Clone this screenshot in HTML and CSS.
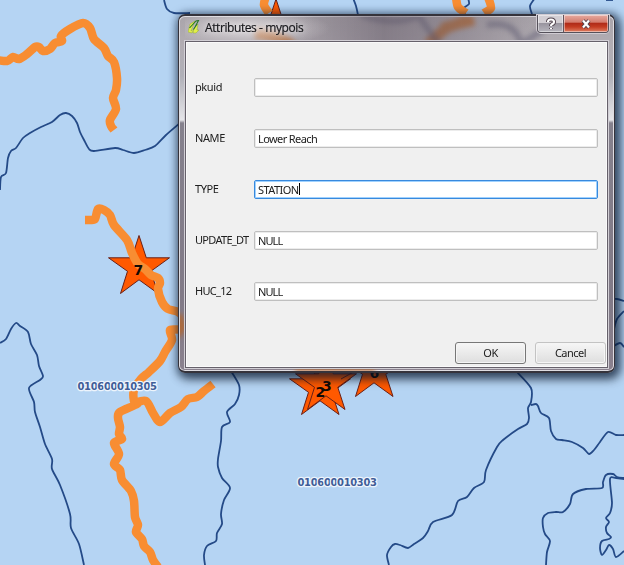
FILE: index.html
```html
<!DOCTYPE html>
<html lang="en">
<head>
<meta charset="utf-8">
<title>Attributes - mypois</title>
<link rel="stylesheet" href="styles.css">
</head>
<body>
<main class="screen">
  <svg class="map" viewBox="0 0 624 565" width="624" height="565">
    <defs><path id="star" d="M0-32.500L7.300-10.200H30.500L11.800 3.300L19 25.500L0 11.800L-18.500 25.500L-11.500 3.300L-30.500-10.200H-7.300Z"/></defs>
    <g class="boundary">
      <path d="M0 190L1 177L6 173L8 158L11 151L16 148L23 138L30 133L41 127L52 122L60 115L66 113L72 116L77 123L80 132L84 140L89 149L94 151L115 148L123 150L134 153L145 150L155 146L166 135L180 123"/>
      <path d="M164 0L167 9L174 13L190 13"/>
      <path d="M353 -2L356 6L358 15"/>
      <path d="M0 343L6 339L11 329L16 323L20 326L28 332L31 344L37 355L39 366L43 376L40 380L29 388L34 402L35 412L40 427L45 444L52 459L52 469L60 485L70 514L71 528L79 544L84 565"/>
      <path d="M231 371L239 385L239 395L235 404L227 412L230 422L222 427L221 441L218 459L218 467L222 478L230 488L224 500L221 514L222 524L217 533L216 541L207 546L204 555L205 565"/>
      <path d="M389 565L387 555L391 547L395 544L400 545L408 548L414 544L423 538L428 531L433 522L452 515L458 501L467 497L474 488L484 482L486 470L497 447L503 440L518 429L527 424L529 418L528 408L531 402L531 388L516 371"/>
      <path d="M531 405L536 404L538 406L541 413L549 418L551 431L556 439L562 440L572 442L583 448L589 454L594 450L600 442L608 432L616 435L624 435"/>
      <path d="M546 565L547 552L550 541L545 534L543 527L543 518L548 513L556 512L563 512L570 504L573 494L586 489L602 488L603 482L606 475L613 474L617 477L624 478"/>
      <path d="M624 479L616 478L610 479L612 503L610 513L606 518L609 522L606 527L607 533L611 537L609 539L602 541L600 548L602 555L606 550L609 545L613 549L616 557L624 551"/>
      <path d="M468 -2L469 4L464 8L465 14"/><path d="M535 -2L530 6L532 14"/><path d="M606 0L613 0"/>
      <path d="M610 299L617 299L624 301"/><path d="M614 329L617 319L624 311"/><path d="M612 347L620 343L624 347"/>
    </g>
    <g class="sites"><use href="#star" x="374" y="371"/><use href="#star" x="139" y="268"/><use href="#star" x="276" y="31.500"/><use href="#star" x="320" y="389"/><use href="#star" x="326" y="384"/><path d="M341 379L357 370"/></g>
    <g class="stream">
      <path d="M-3 60L7 61L13 57L19 59L27 54L35 47L39 47L43 51L50 49L55 43L62 41L61 36L70 29L83 23L90 28L94 39L104 48L108 56L114 62L117 78L116 90L113 98L116 109L110 120L111 126L114 130"/>
      <path d="M85 220L90 220L95 219L98 209L104 210L110 215L114 225L127 240L132 253L138 264L145 269L151 275L158 278L160 283L158 289L162 302L168 309L178 312L185 320L180 329L170 330L172 340L165 352L160 361L149 372L141 379L134 390L134 401L137 404L120 412L118 418L120 427L119 434L122 439L114 443L119 454L114 464L120 470L122 480L131 491L134 501L135 517L138 525L136 532L142 539L144 546L150 552L153 560L158 567"/>
      <path d="M134 403L146 401L153 413L160 422L170 413L181 407L188 399L197 397L204 391L213 384"/>
      <path d="M266 -4L264 5L269 13"/><path d="M456 -3L458 7L466 13"/><path d="M488 -3L491 8L484 13"/>
    </g>
    <g class="numbers"><text x="133.500" y="275">7</text><text x="322" y="391">3</text><text x="315.500" y="397">2</text><text x="369.500" y="378">6</text></g>
    <g class="codes"><text x="77.500" y="390" textLength="79.500">010600010305</text><text x="297.500" y="485.500" textLength="79.500">010600010303</text></g>
  </svg>

  <section class="dialog">
    <svg class="glass" viewBox="0 0 433 354" width="433" height="354">
      <g class="blur">
        <path class="g-orange" d="M75 16Q108 20 112 30M287 3L266 11L248 27M262 11L294 3M-3 298L1 310L-5 318"/>
        <path class="g-blue" d="M180 -3Q210 10 239 -1Q251 17 260 28M307 8Q335 3 341 27L360 15L372 -2"/>
        <path class="g-orange low" d="M115 353H195"/>
      </g>
    </svg>
    <header class="titlebar">
      <svg class="logo" viewBox="0 0 12 14" width="12" height="14"><path class="leaf" d="M0 12L2 4L7 1L5 6L3 11L6 9L4 13Z"/><path class="leaf" d="M5 13L6 8L10 4L9 10L11 10L8 13Z"/><path class="stem" d="M1.500 8L8 1L10.500 .5L7 7M5.500 9.500L9 4"/></svg>
      <h1>Attributes - mypois</h1>
      <div class="controls">
        <span class="help"><svg viewBox="0 0 12 14" width="12" height="14"><path class="rim" d="M3 5Q3 2.500 6 2.500T9 5Q9 6.500 7 7.200Q6 7.800 6 9M6 11V12"/><path class="mark" d="M3 5Q3 2.500 6 2.500T9 5Q9 6.500 7 7.200Q6 7.800 6 9M6 11V12"/></svg></span>
        <span class="close"><svg viewBox="0 0 12 12" width="12" height="12"><path class="rim" d="M3 2.500L9 9.500M9 2.500L3 9.500"/><path class="mark" d="M3 2.500L9 9.500M9 2.500L3 9.500"/></svg></span>
      </div>
    </header>
    <form class="client">
      <div class="fields">
        <div class="row"><span class="label">pkuid</span><div class="input"></div></div>
        <div class="row"><span class="label">NAME</span><div class="input"><span>Lower Reach</span></div></div>
        <div class="row"><span class="label">TYPE</span><div class="input focus"><span class="station">STATION</span><i class="caret"></i></div></div>
        <div class="row"><span class="label wide">UPDATE_DT</span><div class="input"><span class="null">NULL</span></div></div>
        <div class="row"><span class="label wide">HUC_12</span><div class="input"><span class="null">NULL</span></div></div>
      </div>
      <footer class="buttons"><div class="button default">OK</div><div class="button">Cancel</div></footer>
    </form>
  </section>
</main>
<script src="map.js"></script>
</body>
</html>
```
FILE: map.js
```js
// Smooth surveyed vertices into continuous river and watershed curves.
document.querySelectorAll('.boundary path, .stream path').forEach(path => {
  const n = path.getAttribute('d').match(/-?\d+(?:\.\d+)?/g).map(Number);
  const points = [];
  for (let i = 0; i < n.length; i += 2) points.push([n[i], n[i + 1]]);
  let d = `M${points[0].join(' ')}`;
  for (let i = 0; i < points.length - 1; i++) {
    const a = points[Math.max(0, i - 1)], b = points[i];
    const c = points[i + 1], e = points[Math.min(points.length - 1, i + 2)];
    d += `C${b.map((v, k) => v + (c[k] - a[k]) / 7).join(' ')} ${c.map((v, k) => v - (e[k] - b[k]) / 7).join(' ')} ${c.join(' ')}`;
  }
  path.setAttribute('d', d);
});
```
FILE: styles.css
```css
* { box-sizing: border-box; }
body { margin: 0; background: #b5d4f3; overflow: hidden; }
.screen { position: relative; width: 624px; height: 565px; overflow: hidden; }
.map { display: block; }
.boundary { fill: none; stroke: #244a87; stroke-width: 1.8; stroke-linejoin: round; }
.stream { fill: none; stroke: #f88d32; stroke-width: 8.5; stroke-linejoin: round; }
.sites { fill: #ff5900; stroke: #682018; stroke-width: 1; }
.numbers { font: bold 14px "DejaVu Sans", sans-serif; fill: #120a05; }
.codes { font: bold 10px "DejaVu Sans", sans-serif; fill: #405d97; stroke: #edf4fc; stroke-width: 2.5px; stroke-linejoin: round; paint-order: stroke; }

.dialog {
  position: absolute; left: 178px; top: 14px; width: 437px; height: 359px;
  padding: 0 6px 5px; border: 1px solid #35333b; border-top-width: 2px; border-bottom-width: 2px; border-radius: 7px;
  background: linear-gradient(#aaa5ab 0, #b2adb3 30px, #b0b0b8 60px, #e5e5e9 104px, #85818d 107px, #817a87 280px, #8a818e 100%);
  box-shadow: inset 0 0 0 1px #dedce1, 2px 2px 9px 3px rgba(10, 30, 60, .6), 3px 5px 12px rgba(0, 0, 0, .45);
}
.glass { position: absolute; left: 1px; top: 1px; border-radius: 5px; }
.blur { filter: blur(2.5px); fill: none; }
.g-orange { stroke: #b86426; stroke-width: 11; opacity: .75; }
.g-blue { stroke: #5b5a72; stroke-width: 6; opacity: .5; }
.low { stroke-width: 5; }
.titlebar { position: relative; display: flex; align-items: flex-start; height: 25px; padding-left: 3px;
  background: radial-gradient(ellipse 80px 18px at 65px 12px, rgba(235, 231, 233, .7), transparent), linear-gradient(90deg, transparent 18%, rgba(98, 88, 102, .55) 47%, rgba(98, 88, 102, .35) 64%, transparent 86%); }
.logo { flex: none; margin: 4px 5px 0 0; }
.leaf { fill: #e2ee4b; stroke: #87a42c; stroke-width: .4; }
.stem { fill: none; stroke: #257629; stroke-width: 1.1; }
h1 { margin: 3px 0 0; font: 12px/18px "Open Sans", sans-serif; letter-spacing: -.41px; color: #17171b; -webkit-text-stroke: .2px #17171b; white-space: nowrap; text-shadow: 0 0 6px white; }
.controls { display: flex; height: 18px; margin: -1px -1px 0 auto; border: 1px solid #55515a; border-top: 0; border-radius: 0 0 4px 4px; overflow: hidden; box-shadow: 0 0 0 1px #d0cbd2; }
.help, .close { display: flex; align-items: center; justify-content: center; box-shadow: inset 0 0 0 1px rgba(255, 255, 255, .45); }
.help { width: 26px; border-right: 1px solid #66535b; background: linear-gradient(#d2ced3 0 44%, #98949e 48%, #b6b4bc); }
.close { width: 44px; background: linear-gradient(#e6aaa0 0, #d47b6c 43%, #ae2a18 47%, #c43c22 70%, #df8064); }
.rim, .mark { fill: none; stroke-linejoin: round; }
.rim { stroke: #50434d; stroke-width: 4; }
.mark { stroke: #fff; stroke-width: 2.2; }
.client { position: relative; height: 327px; display: flex; flex-direction: column; border: 1px solid #66616b; background: #f0f0f0; box-shadow: inset 0 0 0 1px #fafafa, 0 0 0 1px #d2cfd5; color: #202020; font: 11px/15px "Noto Sans", sans-serif; }
.fields { display: grid; grid-auto-rows: 51px; padding: 20px 9px 0; }
.row { display: grid; grid-template-columns: 59px 344px; align-items: center; }
.label { padding-bottom: 2px; letter-spacing: -.4px; white-space: nowrap; }
.label.wide { letter-spacing: -.7px; }
.input { display: flex; align-items: center; height: 19px; padding: 0 3px 1px; border: 1px solid #bfbfbf; border-radius: 2px; background: #fff; box-shadow: inset 0 0 0 1px #ececec; letter-spacing: -.6px; white-space: nowrap; }
.focus { border-color: #3889dd; box-shadow: inset 0 0 0 1px #a0d2ff; }
.station { letter-spacing: -.55px; }
.null { letter-spacing: -.9px; }
.caret { width: 1px; height: 12px; background: #000; }
.buttons { display: flex; justify-content: flex-end; gap: 9px; margin-top: 25px; padding-right: 1px; }
.button { width: 71px; height: 22px; border: 1px solid #c3c3c3; border-radius: 3px; background: linear-gradient(#f6f6f6, #dedede); text-align: center; line-height: 20px; letter-spacing: -.5px; box-shadow: inset 0 0 0 1px #f5f5f5; }
.default { border-color: #777; }
```
